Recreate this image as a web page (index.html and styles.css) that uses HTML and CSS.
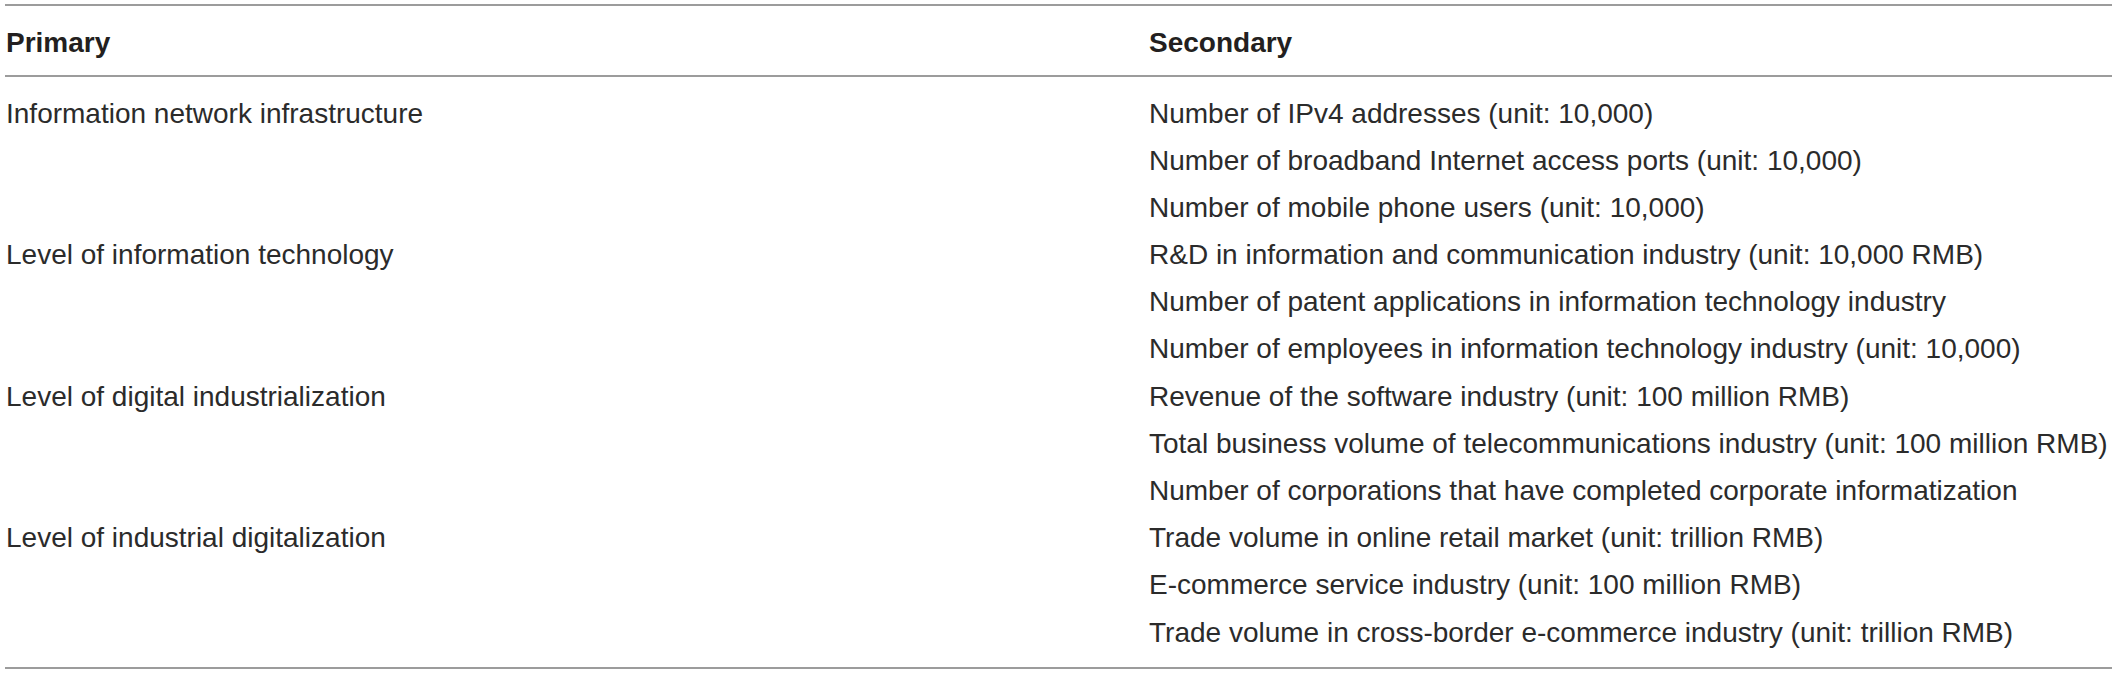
FILE: index.html
```html
<!DOCTYPE html>
<html lang="en">
<head>
<meta charset="utf-8">
<title>Indicators</title>
<link rel="stylesheet" href="styles.css">
</head>
<body>
<div class="page">
<table class="indicators">
  <thead>
    <tr class="head-row">
      <th class="col-primary">Primary</th>
      <th class="col-secondary">Secondary</th>
    </tr>
  </thead>
  <tbody>
    <tr class="first">
      <td class="col-primary" rowspan="3">Information network infrastructure</td>
      <td class="col-secondary">Number of IPv4 addresses (unit: 10,000)</td>
    </tr>
    <tr><td class="col-secondary">Number of broadband Internet access ports (unit: 10,000)</td></tr>
    <tr><td class="col-secondary">Number of mobile phone users (unit: 10,000)</td></tr>
    <tr>
      <td class="col-primary" rowspan="3">Level of information technology</td>
      <td class="col-secondary">R&amp;D in information and communication industry (unit: 10,000 RMB)</td>
    </tr>
    <tr><td class="col-secondary">Number of patent applications in information technology industry</td></tr>
    <tr><td class="col-secondary">Number of employees in information technology industry (unit: 10,000)</td></tr>
    <tr>
      <td class="col-primary" rowspan="3">Level of digital industrialization</td>
      <td class="col-secondary">Revenue of the software industry (unit: 100 million RMB)</td>
    </tr>
    <tr><td class="col-secondary">Total business volume of telecommunications industry (unit: 100 million RMB)</td></tr>
    <tr><td class="col-secondary">Number of corporations that have completed corporate informatization</td></tr>
    <tr>
      <td class="col-primary" rowspan="3">Level of industrial digitalization</td>
      <td class="col-secondary">Trade volume in online retail market (unit: trillion RMB)</td>
    </tr>
    <tr><td class="col-secondary">E-commerce service industry (unit: 100 million RMB)</td></tr>
    <tr class="last"><td class="col-secondary">Trade volume in cross-border e-commerce industry (unit: trillion RMB)</td></tr>
  </tbody>
</table>
</div>
</body>
</html>
```

FILE: styles.css
```css
html, body {
  margin: 0;
  padding: 0;
  background: #ffffff;
}

.page {
  padding: 4px 0 0 5px;
}

.indicators {
  width: 2107px;
  border-collapse: collapse;
  table-layout: fixed;
  font-family: "Liberation Sans", Arial, sans-serif;
  font-size: 28px;
  line-height: 32px;
  color: #2b2b2b;
}

.indicators thead tr {
  border-top: 2px solid #9c9c9c;
  border-bottom: 2px solid #9c9c9c;
}

.indicators tbody {
  border-bottom: 2px solid #9c9c9c;
}

.indicators th {
  font-weight: bold;
  color: #231f20;
  text-align: left;
  padding: 21px 0 16px 1px;
}

.indicators td {
  padding: 7.6px 0 7.6px 1px;
  vertical-align: top;
  white-space: nowrap;
}

.indicators .col-primary {
  width: 1142px;
}

.indicators tr.first td {
  padding-top: 20.5px;
}

.indicators tr.last td {
  padding-bottom: 18.3px;
}
```
